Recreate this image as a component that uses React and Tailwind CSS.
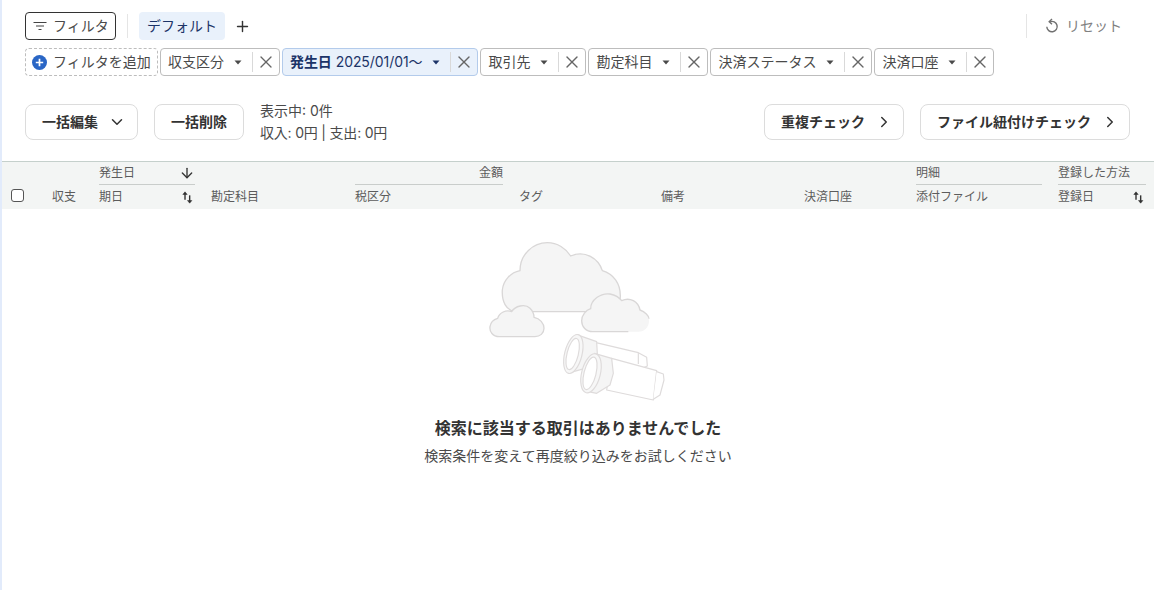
import { ChevronDown, ChevronRight, ArrowDown, Plus, X } from 'lucide-react'

const font = { fontFamily: '"Inter", "Noto Sans CJK JP", sans-serif' }

function Caret() {
  return (
    <svg width="8" height="5" viewBox="0 0 8 5" className="text-current">
      <path d="M0.5 0.5h7L4 4.5z" fill="currentColor" />
    </svg>
  )
}

function FilterChip({ children, active }) {
  return (
    <div
      className={
        'flex h-7 items-center rounded border pl-[7px] text-sm ' +
        (active
          ? 'border-[#b3cbeb] bg-[#e9f1fb] text-[#1c3468]'
          : 'border-[#bdbdbd] bg-white text-[#4a4a4a]')
      }
    >
      <span className="whitespace-nowrap">{children}</span>
      <span className="ml-[10px] flex w-[8px] justify-center">
        <Caret />
      </span>
      <span className="ml-[10px] h-5 w-px bg-[#d9d9d9]" />
      <span className="flex w-[26px] justify-center text-[#666]">
        <X size={20} strokeWidth={1.6} />
      </span>
    </div>
  )
}

function SortIcon() {
  return (
    <svg width="11" height="13" viewBox="0 0 10 12" fill="none" stroke="#333" strokeWidth="1.3">
      <path d="M2.7 8V2" />
      <path d="M0.7 3.2L2.7 0.8l2 2.4z" fill="#333" strokeWidth="0.5" />
      <path d="M7 4v6" />
      <path d="M5 8.8l2 2.4 2-2.4z" fill="#333" strokeWidth="0.5" />
    </svg>
  )
}

function HeadCell({ top, bottom, right, topIcon, sort }) {
  return (
    <div className="flex flex-col px-2">
      <div
        className={
          'flex h-[23px] items-center ' +
          (top ? 'border-b border-[#c9cdcb] ' : '') +
          (right ? 'justify-end' : 'justify-between')
        }
      >
        {top && <span>{top}</span>}
        {topIcon && <ArrowDown size={16} className="text-[#333]" strokeWidth={2} />}
      </div>
      <div className="flex h-[24px] items-center justify-between">
        <span>{bottom}</span>
        {sort && (
          <span className="mr-[2px]">
            <SortIcon />
          </span>
        )}
      </div>
    </div>
  )
}

function Binoculars() {
  return (
    <svg width="210" height="180" viewBox="0 0 630 540" className="mr-[6px] block">
      <g stroke="#d9d7d7" strokeWidth="4" fill="#f5f5f5" strokeLinejoin="round">
        <path d="M135 245C108 240 95 215 97 180C100 150 122 128 150 122C150 72 190 38 232 38C262 38 288 55 302 78C345 60 385 85 397 122C430 132 452 160 451 200C450 225 435 245 410 245Z" />
        <path d="M88 320C68 320 58 305 60 290C62 275 72 268 83 265C88 248 108 238 125 245C135 228 165 220 180 235C190 245 192 255 192 262C210 265 222 280 222 295C222 310 210 320 195 320Z" />
        <path d="M368 305C348 305 335 290 335 272C335 255 348 240 362 236C362 210 392 188 420 192C435 195 448 203 455 212C480 200 505 215 510 240C525 245 537 258 537 272C537 290 525 305 505 305Z" stroke="none" />
        <path d="M475 305H368C348 305 335 290 335 272C335 255 348 240 362 236C362 210 392 188 420 192C435 195 448 203 455 212C480 200 505 215 510 240C525 245 537 258 537 266" fill="none" />
      </g>
      <g stroke="#dedbdb" strokeWidth="3.5" fill="#fff" strokeLinejoin="round">
        <path d="M378 338L505 368L530 382L532 408L505 420L380 400Z" />
        <path d="M505 368L505 402" fill="none" />
        <path d="M320 314L380 335L382 372L345 415L300 428Z" fill="#f5f5f5" />
        <ellipse cx="310" cy="372" rx="26" ry="60" transform="rotate(14 310 372)" fill="#f7f7f7" />
        <ellipse cx="308" cy="372" rx="17" ry="48" transform="rotate(14 308 372)" />
        <path d="M425 385L560 422L550 510L410 480Z" />
        <path d="M560 425L580 432L582 450L570 495L550 508" />
        <path d="M373 370L425 385L430 430L420 465L380 490L355 485Z" fill="#f5f5f5" />
        <ellipse cx="363" cy="430" rx="28" ry="60" transform="rotate(14 363 430)" fill="#f7f7f7" />
        <ellipse cx="360" cy="430" rx="18" ry="50" transform="rotate(14 360 430)" />
      </g>
    </svg>
  )
}

export default function App() {
  return (
    <div className="flex h-screen overflow-hidden bg-white text-[#333]" style={font}>
      <div className="w-[2px] shrink-0 bg-[#e2ebfb]" />
      <div className="flex min-w-0 flex-1 flex-col">
        <div className="pl-[23px] pr-6 pt-3">
          <div className="flex h-7 items-center">
            <button className="flex h-7 w-[91px] items-center gap-[6px] rounded border border-[#333] pl-[7px] text-sm text-[#4a4a4a]">
              <svg width="14" height="12" viewBox="0 0 14 12" fill="none" stroke="#444" strokeWidth="1.2">
                <path d="M0.5 2.5h13M3 6h8M5.5 9.5h3" />
              </svg>
              フィルタ
            </button>
            <span className="ml-[11px] h-6 w-px bg-[#e5e5e5]" />
            <span className="ml-[11px] flex h-7 w-[86px] items-center justify-center rounded bg-[#e9f1fb] text-sm text-[#1c3468]">
              デフォルト
            </span>
            <Plus size={17} className="ml-[9px] text-[#333]" strokeWidth={2} />
            <span className="ml-auto h-6 w-px bg-[#e5e5e5]" />
            <span className="ml-[17px] flex w-[86px] items-center gap-[6px] text-sm text-[#808080]">
              <svg width="16" height="16" viewBox="0 0 16 16" fill="none" stroke="#707070" strokeWidth="1.4">
                <path d="M6 3.8A5.2 5.2 0 1 1 2.8 8.8" />
                <path d="M8 1L5.2 3.7L8 6.2" />
              </svg>
              リセット
            </span>
          </div>

          <div className="mt-2 flex gap-[2px]">
            <button className="flex h-7 w-[133px] items-center gap-[6px] rounded border border-dashed border-[#bdbdbd] pl-[6px] text-sm text-[#4a4a4a]">
              <svg width="15" height="15" viewBox="0 0 15 15">
                <circle cx="7.5" cy="7.5" r="7.5" fill="#2a66c5" />
                <path d="M7.5 3.8v7.4M3.8 7.5h7.4" stroke="#fff" strokeWidth="1.7" />
              </svg>
              フィルタを追加
            </button>
            <FilterChip>収支区分</FilterChip>
            <FilterChip active>
              <span className="tracking-[-0.07px]">
                <span className="font-bold">発生日</span> 2025/01/01〜
              </span>
            </FilterChip>
            <FilterChip>取引先</FilterChip>
            <FilterChip>勘定科目</FilterChip>
            <FilterChip>決済ステータス</FilterChip>
            <FilterChip>決済口座</FilterChip>
          </div>

          <div className="mt-7 flex h-9 items-center">
            <button className="flex h-9 w-[113px] items-center rounded-lg border border-[#dcdcdc] pl-4 text-sm font-bold">
              一括編集
              <ChevronDown size={18} className="ml-[10px]" strokeWidth={2} />
            </button>
            <button className="ml-4 h-9 w-[90px] rounded-lg border border-[#dcdcdc] text-sm font-bold">一括削除</button>
            <div className="ml-4 text-sm leading-[22px] text-[#4a4a4a]">
              <div>表示中: 0件</div>
              <div className="tracking-[-0.2px]">収入: 0円 | 支出: 0円</div>
            </div>
            <button className="ml-auto flex h-9 w-[140px] items-center rounded-lg border border-[#dcdcdc] pl-4 text-sm font-bold">
              重複チェック
              <ChevronRight size={18} className="ml-[10px]" strokeWidth={2} />
            </button>
            <button className="ml-4 flex h-9 w-[210px] items-center rounded-lg border border-[#dcdcdc] pl-4 text-sm font-bold">
              ファイル紐付けチェック
              <ChevronRight size={18} className="ml-[10px]" strokeWidth={2} />
            </button>
          </div>
        </div>

        <div className="mt-[21px] grid grid-cols-[42px_47px_112px_144px_164px_142px_143px_112px_142px_104px] border-t border-[#c5d0cc] bg-[#f3f5f4] text-xs text-[#5c5c5c]">
          <div className="flex items-end pb-[7px] pl-[9px]">
            <span className="h-[13px] w-[13px] rounded-[3px] border border-[#555] bg-white" />
          </div>
          <HeadCell bottom="収支" />
          <HeadCell top="発生日" bottom="期日" topIcon sort />
          <HeadCell bottom="勘定科目" />
          <HeadCell top="金額" bottom="税区分" right />
          <HeadCell bottom="タグ" />
          <HeadCell bottom="備考" />
          <HeadCell bottom="決済口座" />
          <HeadCell top="明細" bottom="添付ファイル" />
          <HeadCell top="登録した方法" bottom="登録日" sort />
        </div>

        <div className="flex flex-col items-center pt-[21px]">
          <Binoculars />
          <p className="mt-[6px] text-base leading-6 font-bold text-[#333]">検索に該当する取引はありませんでした</p>
          <p className="mt-1 text-sm leading-6 text-[#4a4a4a]">検索条件を変えて再度絞り込みをお試しください</p>
        </div>
      </div>
    </div>
  )
}
